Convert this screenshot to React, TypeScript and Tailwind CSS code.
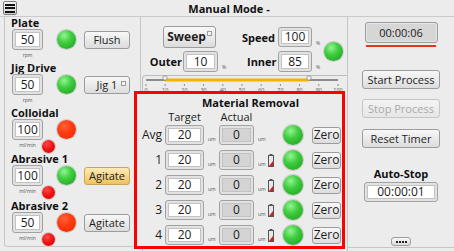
import type { ReactNode } from "react"

function Field({ value, className, gray }: { value: string; className: string; gray?: boolean }) {
  return (
    <div className={`${className} shrink-0 rounded-[3px] border border-[#a2a2a2] bg-[#e2e2e2] p-[2px]`}>
      <div
        className={`flex h-full w-full items-center justify-center border border-[#c2c2c2] text-[12px] leading-none text-[#1c1c1c] ${
          gray ? "bg-[#d4d4d4]" : "bg-white"
        }`}
      >
        {value}
      </div>
    </div>
  )
}

function Btn({
  children,
  className,
  tone = "plain",
  dot,
}: {
  children: ReactNode
  className: string
  tone?: "plain" | "yellow" | "off"
  dot?: boolean
}) {
  const look =
    tone === "yellow"
      ? "border-[#c9a45a] from-[#fdebb4] to-[#efc35a] text-[#222]"
      : tone === "off"
      ? "border-[#c6c6c6] from-[#f4f4f4] to-[#e6e6e6] text-[#a9a9a9]"
      : "border-[#9c9c9c] from-[#f8f8f8] to-[#dcdcdc] text-[#1e1e1e]"
  return (
    <div
      className={`${className} relative flex shrink-0 items-center justify-center rounded-[3px] border bg-linear-to-b leading-none ${look}`}
    >
      {children}
      {dot && <div className="absolute top-[4px] right-[3px] size-[5px] border border-[#9a9a9a] bg-[#f6f6f6]" />}
    </div>
  )
}

function Led({ color, className }: { color: "green" | "red" | "dot"; className: string }) {
  const fill =
    color === "green"
      ? "bg-[radial-gradient(circle_at_38%_30%,#92f592_0%,#3fcd3f_40%,#1c9a1c_100%)]"
      : color === "red"
      ? "bg-[radial-gradient(circle_at_38%_30%,#ff6236_0%,#ff3810_45%,#ea2a00_100%)]"
      : "bg-[radial-gradient(circle_at_38%_30%,#ff4a4a_0%,#f01010_50%,#d80000_100%)]"
  return <div className={`${className} shrink-0 rounded-full shadow-[0_0_0_1px_#cdcdcd] ${fill}`} />
}

function Battery() {
  return (
    <svg width="6" height="13" viewBox="0 0 6 13" className="shrink-0">
      <rect x="1.5" y="0" width="3" height="1.5" fill="#555" />
      <rect x="0.5" y="1.5" width="5" height="11" fill="#e8e8e8" stroke="#555" />
      <polygon points="1,12 5,12 5,7" fill="#e01a1a" />
    </svg>
  )
}

function Group({
  label,
  value,
  unit,
  led,
  button,
  tone,
  dot,
  small,
  h,
}: {
  label: string
  value: string
  unit: string
  led: "green" | "red"
  button?: string
  tone?: "plain" | "yellow"
  dot?: boolean
  small?: boolean
  h: string
}) {
  return (
    <div className={`flex ${h} flex-col`}>
      <div className="h-[12px] pl-[6px] text-[11px] font-bold leading-[12px] text-[#111]">{label}</div>
      <div className="flex h-[21px] items-center">
        <Field className="ml-[7px] h-[21px] w-[31px]" value={value} />
        <Led color={led} className="ml-[14px] size-[19px]" />
        {button && (
          <Btn className="ml-[8px] h-[18px] w-[46px] text-[11px]" tone={tone} dot={dot}>
            {button}
          </Btn>
        )}
      </div>
      <div className="flex items-start">
        <div className="ml-[7px] w-[31px] pt-[2px] text-center text-[5px] leading-[6px] text-[#555]">{unit}</div>
        {small && <Led color="dot" className="-ml-[1px] size-[13px]" />}
      </div>
    </div>
  )
}

function Row({ label, battery }: { label: string; battery?: boolean }) {
  return (
    <div className="flex h-[20px] items-center">
      <div className="w-[25px] text-right text-[12px] leading-none text-[#1c1c1c]">{label}</div>
      <Field className="ml-[3px] h-[20px] w-[39px]" value="20" />
      <div className="flex h-full w-[15px] items-end pb-[3px] pl-[4px] text-[5px] leading-none text-[#555]">um</div>
      <Field className="h-[20px] w-[35px]" value="0" gray />
      <div className="flex h-full w-[14px] items-end pb-[3px] pl-[4px] text-[5px] leading-none text-[#555]">um</div>
      {battery ? <Battery /> : <div className="w-[6px]" />}
      <Led color="green" className="ml-[9px] size-[20px]" />
      <Btn className="ml-[9px] h-[17px] w-[29px] text-[12px]">Zero</Btn>
    </div>
  )
}

function Slider() {
  const ticks = [0, 10, 20, 30, 40, 50, 60, 70, 80, 90, 100]
  return (
    <svg width="204" height="15" className="block overflow-visible">
      <line x1="3" y1="4" x2="195" y2="4" stroke="#8c8c8c" strokeWidth="2" />
      <line x1="22" y1="4" x2="166" y2="4" stroke="#f4b400" strokeWidth="3" />
      <circle cx="22" cy="2" r="2.2" fill="#f4f4f4" stroke="#8a8a8a" strokeWidth="0.8" />
      <circle cx="166" cy="2" r="2.2" fill="#f4f4f4" stroke="#8a8a8a" strokeWidth="0.8" />
      {ticks.map((t) => {
        const x = 3 + t * 1.92
        return (
          <g key={t}>
            <line x1={x} y1="8" x2={x} y2="10" stroke="#777" strokeWidth="0.8" />
            <text x={x} y="16" fontSize="5.5" textAnchor="middle" fill="#555" fontFamily="Open Sans, sans-serif">
              {t}
            </text>
          </g>
        )
      })}
    </svg>
  )
}

export default function App() {
  return (
    <div className="h-[251px] w-[454px] overflow-hidden bg-[#ececec] font-['Open_Sans','Noto_Sans',sans-serif] text-[#1c1c1c]">
      <div className="relative flex h-[17px] items-center justify-center border-b border-[#cbcbcb]">
        <div className="absolute top-[1px] left-[3px] flex size-[14px] flex-col items-center justify-center gap-[1.5px] rounded-[2px] border border-[#7c7c7c] bg-linear-to-b from-[#f4f4f4] to-[#d2d2d2]">
          <div className="h-[2px] w-[10px] bg-[#111]" />
          <div className="h-[2px] w-[10px] bg-[#111]" />
          <div className="h-[2px] w-[10px] bg-[#111]" />
        </div>
        <div className="pl-[4px] text-[11px] font-bold leading-none text-[#111]">Manual Mode -</div>
      </div>

      <div className="flex h-[234px]">
        {/* left */}
        <div className="ml-[4px] flex h-[230px] w-[137px] flex-col rounded-b-[3px] border-x border-b border-[#c6c6c6]">
          <Group h="h-[45px]" label="Plate" value="50" unit="rpm" led="green" button="Flush" />
          <Group h="h-[45px]" label="Jig Drive" value="50" unit="rpm" led="green" button="Jig 1" dot />
          <Group h="h-[46px]" label="Colloidal" value="100" unit="ml/min" led="red" small />
          <Group h="h-[47px]" label="Abrasive 1" value="100" unit="ml/min" led="green" button="Agitate" tone="yellow" small />
          <Group h="h-[40px]" label="Abrasive 2" value="50" unit="ml/min" led="red" button="Agitate" small />
        </div>

        {/* middle */}
        <div className="flex w-[207px] flex-col border-r border-[#c6c6c6]">
          <div className="mt-[9px] flex items-center">
            <div className="flex flex-col gap-[3px]">
              <div className="flex h-[22px] items-center">
                <Btn className="ml-[22px] h-[22px] w-[53px] text-[12px] font-bold" dot>
                  <span className="pr-[6px]">Sweep</span>
                </Btn>
                <div className="w-[59px] text-right text-[11px] font-bold leading-none text-[#111]">Speed</div>
                <Field className="ml-[3px] h-[20px] w-[34px]" value="100" />
                <div className="ml-[4px] self-end pb-[2px] text-[5px] leading-none text-[#555]">%</div>
              </div>
              <div className="flex h-[21px] items-center">
                <div className="w-[41px] text-right text-[11px] font-bold leading-none text-[#111]">Outer</div>
                <Field className="ml-[1px] h-[21px] w-[35px]" value="10" />
                <div className="h-full w-[29px] pt-[14px] pl-[4px] text-[5px] leading-none text-[#555]">%</div>
                <div className="w-[28px] text-right text-[11px] font-bold leading-none text-[#111]">Inner</div>
                <Field className="ml-[3px] h-[21px] w-[34px]" value="85" />
                <div className="ml-[4px] self-end pb-[2px] text-[5px] leading-none text-[#555]">%</div>
              </div>
            </div>
            <Led color="green" className="mt-[4px] ml-[4px] size-[19px]" />
          </div>

          <div className="mt-[3px] ml-[1px] flex flex-1 flex-col rounded-tl-[4px] border-t border-l border-[#bdbdbd]">
            <Slider />
            <div className="relative -ml-[9px] flex h-[158px] w-[211px] flex-col border-[3px] border-[#ff0000] bg-[#ececec]">
              <div className="mt-[3px] h-[12px] pl-[22px] text-center text-[11px] font-bold leading-[12px] text-[#111]">
                Material Removal
              </div>
              <div className="flex h-[14px] items-center text-[11px] leading-none">
                <div className="w-[28px]" />
                <div className="w-[39px] text-center">Target</div>
                <div className="w-[15px]" />
                <div className="w-[35px] text-center">Actual</div>
              </div>
              <div className="mt-[2px] flex flex-col gap-[5px]">
                <Row label="Avg" />
                <Row label="1" battery />
                <Row label="2" battery />
                <Row label="3" battery />
                <Row label="4" battery />
              </div>
            </div>
          </div>
        </div>

        {/* right */}
        <div className="flex h-[231px] flex-1 flex-col items-center border-b border-[#c6c6c6]">
          <div className="mt-[5px] flex h-[21px] w-[73px] items-center justify-center rounded-[3px] border border-[#9c9c9c] bg-[#d6d6d6] text-[11px] leading-none shadow-[inset_0_0_0_1px_#e6e6e6]">
            00:00:06
          </div>
          <div className="mt-[2px] h-[2px] w-[70px] bg-[#e8341c]" />
          <Btn className="mt-[23px] h-[19px] w-[78px] text-[11px]">Start Process</Btn>
          <Btn className="mt-[10px] h-[19px] w-[78px] text-[11px]" tone="off">
            Stop Process
          </Btn>
          <Btn className="mt-[11px] h-[19px] w-[78px] text-[11px]">Reset Timer</Btn>
          <div className="mt-[18px] flex h-[14px] items-center text-[11px] font-bold leading-none text-[#111]">Auto-Stop</div>
          <Field className="mt-[2px] h-[20px] w-[74px]" value="00:00:01" />
          <Btn className="mt-auto mb-[1px] h-[9px] w-[20px]">
            <div className="flex gap-[1px]">
              <div className="size-[2px] bg-[#222]" />
              <div className="size-[2px] bg-[#222]" />
              <div className="size-[2px] bg-[#222]" />
              <div className="size-[2px] bg-[#222]" />
            </div>
          </Btn>
        </div>
      </div>
    </div>
  )
}
